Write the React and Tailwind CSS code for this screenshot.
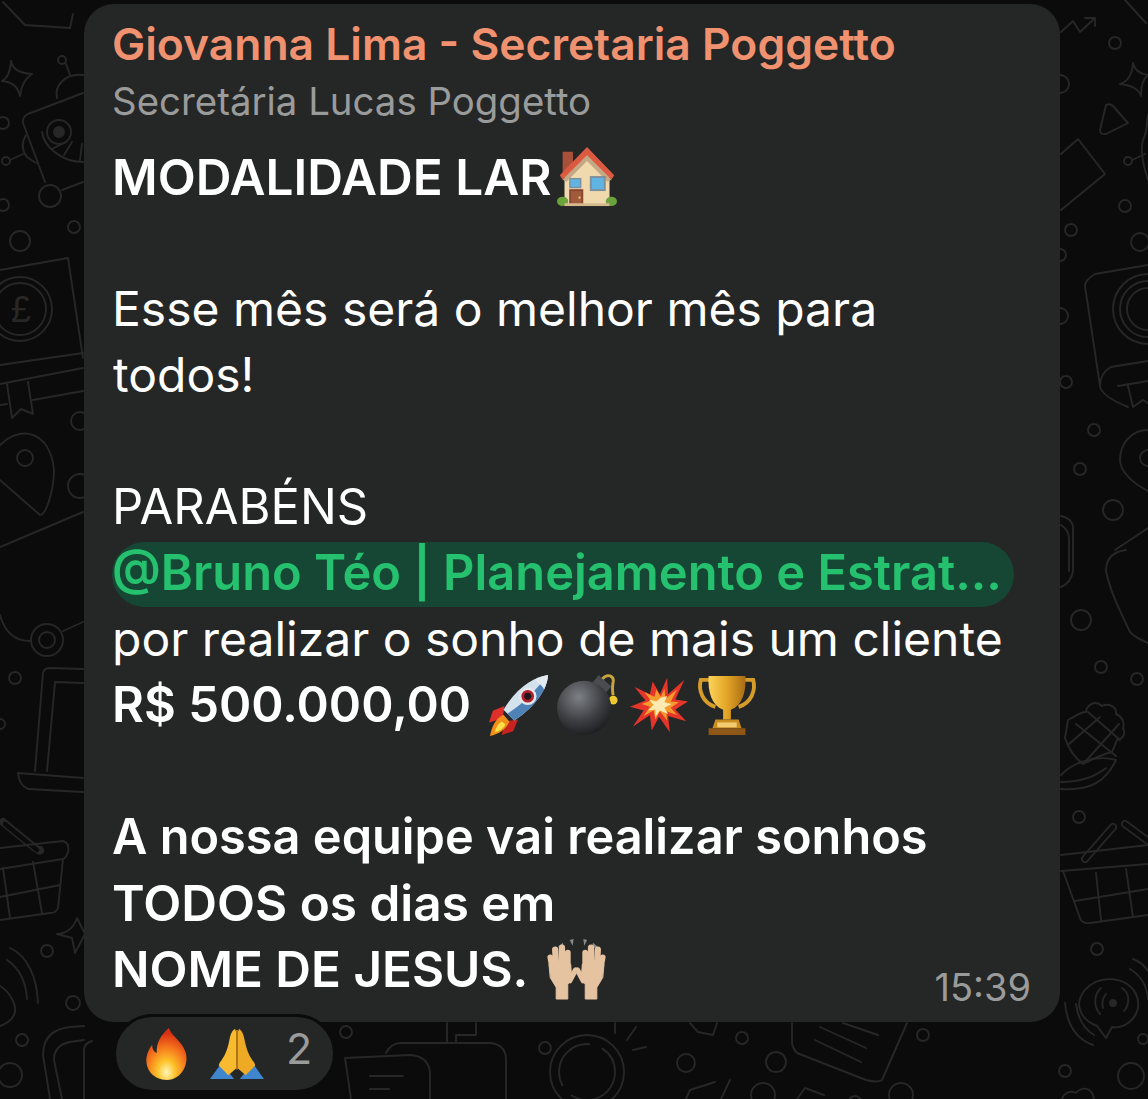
const House = ({ className }) => (
  <svg viewBox="0 0 64 64" className={className}>
    <path d="M6 5h11v16L6 30z" fill="#a9503b" />
    <path d="M8 30 32 6l24 24v31H8z" fill="#f1d9ae" />
    <path d="M32 0 3 30l3 5L32 9l26 26 3-5z" fill="#dc5a41" />
    <path d="M32 9 6 35l4 2L32 15l22 22 4-2z" fill="#c2a884" />
    <rect x="13" y="33" width="13" height="11" fill="#7d8f9a" />
    <rect x="14.5" y="34.5" width="10" height="8" fill="#5fb4e2" />
    <rect x="35" y="31" width="17" height="16" fill="#7d8f9a" />
    <rect x="37" y="33" width="13" height="12" fill="#5fb4e2" />
    <rect x="13" y="45" width="15" height="17" fill="#8a4630" />
    <rect x="15" y="47" width="11" height="15" fill="#a15a3c" />
    <circle cx="24" cy="54" r="1.2" fill="#f1d36b" />
    <ellipse cx="6" cy="58" rx="6" ry="5" fill="#6aa33c" />
    <ellipse cx="58" cy="58" rx="6" ry="5" fill="#6aa33c" />
    <rect x="8" y="60" width="48" height="3" fill="#d3b98d" />
  </svg>
);

const Rocket = ({ className }) => (
  <svg viewBox="0 0 64 64" className={className}>
    <path d="M17 33 5 38 1 50l14-4z" fill="#df2f2b" />
    <path d="M31 47 26 59l-12 4 4-14z" fill="#c9231f" />
    <path d="M16 42C7 46 4 55 2 64c9-2 17-7 20-15z" fill="#f0901a" />
    <path d="M14 49c-4 3-6 7-7 11 5-1 9-4 11-8z" fill="#fbe04a" />
    <path d="M62 1C48 3 30 13 16 37l11 11C50 33 61 15 62 1z" fill="#d4e2ec" />
    <path d="M62 1c-1 14-12 32-35 47l-7-7C38 30 52 13 62 1z" fill="#4f83b8" />
    <path d="M62 1c-5 1-10 2-14 5 3 2 8 6 10 10 2-5 4-10 4-15z" fill="#e4ebf0" />
    <circle cx="41" cy="23" r="9" fill="#e5e9ec" />
    <circle cx="41" cy="23" r="6.5" fill="#b0202a" />
    <circle cx="41" cy="23" r="3.6" fill="#1f171c" />
  </svg>
);

const Bomb = ({ className }) => (
  <svg viewBox="0 0 64 64" className={className}>
    <defs>
      <radialGradient id="bombBody" cx="0.4" cy="0.3" r="0.8">
        <stop offset="0" stopColor="#7d8084" />
        <stop offset="0.55" stopColor="#3d3f43" />
        <stop offset="1" stopColor="#141517" />
      </radialGradient>
    </defs>
    <path d="M34 12 43 1l13 12-9 10z" fill="#4a4c50" />
    <path d="M47 5c5-6 12-3 11 3-1 5-1 9 0 14" fill="none" stroke="#c9a53e" strokeWidth="3" />
    <circle cx="58" cy="27" r="4.5" fill="#ecc92e" />
    <circle cx="28" cy="35" r="28" fill="url(#bombBody)" />
  </svg>
);

const Collision = ({ className }) => (
  <svg viewBox="0 0 64 64" className={className}>
    <path d="M41 2 42 20 60 4 50 26l14 2-14 9 12 13-20-6 2 18-12-17-8 15-2-17L3 56l12-18L0 34l17-7L5 12l17 8 3-14 8 14z" fill="#e5352a" />
    <path d="M38 14 39 25 52 15 45 28l9 1-9 6 7 8-12-4 1 10-8-10-5 9-2-10-11 6 7-10-9-3 10-4-7-9 11 5 2-8 5 8z" fill="#f59a2d" />
    <path d="M34 24 41 22 38 29 46 31 38 35 42 42 33 38 28 45 28 37 20 38 26 32 21 26 29 28z" fill="#fdeab0" />
  </svg>
);

const Trophy = ({ className }) => (
  <svg viewBox="0 0 64 64" className={className}>
    <defs>
      <linearGradient id="trophyGold" x1="0" x2="1">
        <stop offset="0" stopColor="#fbd35a" />
        <stop offset="0.5" stopColor="#e3a526" />
        <stop offset="1" stopColor="#a86c14" />
      </linearGradient>
    </defs>
    <path d="M15 6H5c-3 11 2 24 15 28M49 6h10c3 11-2 24-15 28" fill="none" stroke="#d69c2a" strokeWidth="4" />
    <path d="M13 2h38c1 16-3 30-15 35v10h-8V37C16 32 12 18 13 2z" fill="url(#trophyGold)" />
    <path d="M20 47h24l3 9H17z" fill="#c98c20" />
    <rect x="22" y="50" width="20" height="5" fill="#f1cc70" />
    <rect x="13" y="56" width="38" height="7" fill="#8f5716" />
  </svg>
);

const Hand = () => (
  <g stroke="#e6c3a0" strokeLinecap="round" fill="#e6c3a0">
    <path d="M8 36 5 20" strokeWidth="6" />
    <path d="M11 30 10 12" strokeWidth="6.5" />
    <path d="M17 30V10" strokeWidth="6.5" />
    <path d="M23 32V15" strokeWidth="6" />
    <path d="M25 44 31 33" strokeWidth="5.5" />
    <path d="M4 27h22l1 14-4 7v15H11V51L5 41z" strokeWidth="1" />
  </g>
);

const Hands = ({ className }) => (
  <svg viewBox="0 0 64 64" className={className}>
    <g fill="#8a8a8a">
      <path d="m13 9 5-4 1 6z" />
      <path d="m25 2 4-1-1 7z" />
      <path d="m39 1 4 1-3 6z" />
      <path d="m49 5 5 4-6 2z" />
    </g>
    <Hand />
    <g transform="matrix(-1 0 0 1 64 0)">
      <Hand />
    </g>
  </svg>
);

const Fire = ({ className }) => (
  <svg viewBox="0 0 48 56" className={className}>
    <defs>
      <radialGradient id="fireCore" cx="0.5" cy="0.85" r="0.75">
        <stop offset="0" stopColor="#fff6b8" />
        <stop offset="0.3" stopColor="#fdc229" />
        <stop offset="0.65" stopColor="#f5761c" />
        <stop offset="1" stopColor="#d92f14" />
      </radialGradient>
    </defs>
    <path d="M26 0c3 9 14 14 18 26 4 13-4 29-20 30C9 56 0 44 2 31c1-5 3-9 6-13 0 5 2 8 5 9C12 16 18 7 26 0z" fill="url(#fireCore)" />
  </svg>
);

const Pray = ({ className }) => (
  <svg viewBox="0 0 56 54" className={className}>
    <path d="M0 53 12 36l13 17z" fill="#3f86cf" />
    <path d="M56 53 44 36 31 53z" fill="#3f86cf" />
    <path d="M26 1c-3 1-5 6-6 12-2 10-5 17-10 23l-1 3 10 10 8-7V4z" fill="#f8bb30" />
    <path d="M30 1c3 1 5 6 6 12 2 10 5 17 10 23l1 3-10 10-8-7V4z" fill="#eeaa24" />
    <path d="M27 2h2v40l-1 2-1-2z" fill="#b47a14" />
  </svg>
);

const Wallpaper = () => (
  <svg viewBox="0 0 1148 1099" className="absolute inset-0 h-full w-full" fill="none" stroke="#272727" strokeWidth="1.9" strokeLinecap="round" strokeLinejoin="round">
    {/* left side, top */}
    <path d="M3 2 25 25l45 3 3-14" />
    <path d="M11 61q2 12 21 13-10 6-12 22-3-14-18-15 8-4 9-20z" />
    <path d="M83 93 28 114q-6 3-5 9l22 59" />
    <circle cx="50" cy="196" r="11" />
    <path d="m62 190 21-8M10 160l13-6" />
    <circle cx="6" cy="161" r="4" />
    <path d="M26 135q-7 12 1 22l9 6" />
    <circle cx="59" cy="132" r="12" />
    <circle cx="59" cy="132" r="5" fill="#272727" />
    <path d="M42 132c2 15 20 30 41 30M52 149l14-7M64 155l8-13M80 160l2-16" />
    <circle cx="62" cy="60" r="4" />
    <path d="m66 64 4 11M57 98c-3-12 8-25 26-23" />
    <circle cx="3" cy="123" r="6" />
    <circle cx="3" cy="205" r="6" />
    <circle cx="74" cy="227" r="6" />
    <circle cx="20" cy="241" r="10" />
    <path d="m0 270 68-12 15 100" />
    <circle cx="20" cy="309" r="32" />
    <circle cx="20" cy="309" r="26" />
    <text x="11" y="322" fontSize="36" fill="#272727" stroke="none" fontFamily="Liberation Sans">£</text>
    <path d="m0 365 83-12M0 384l83-16M0 405l7-1M33 400l50-9" />
    <path d="m7 384 5 34 9-9 12 5-5-32" />
    <circle cx="80" cy="421" r="9" />
    <circle cx="80" cy="486" r="12" />
    <path d="M0 445c20-20 50-15 54 25 0 20-8 45-14 45L0 480" />
    <circle cx="25" cy="458" r="8" />
    <path d="m0 547 83-35" />
    {/* left side, bottom */}
    <path d="M0 615c5 18 15 26 30 26" />
    <circle cx="47" cy="640" r="16" />
    <circle cx="47" cy="640" r="8" />
    <path d="m63 631 20-9" />
    <circle cx="15" cy="678" r="6" />
    <circle cx="0" cy="724" r="5" />
    <path d="m35 771 8-98q1-5 7-5l33 1M47 771l8-89 28 1" />
    <path d="m18 773 65 5M18 773q1 12 10 16l55 3" />
    <path d="m3 822 32 26q6 4 5 2" strokeWidth="8" stroke="#272727" />
    <path d="m5 824 32 26" strokeWidth="4.5" stroke="#0b0b0b" />
    <path d="m0 848 63-7q7 2 5 11-2 6-5 7L0 869" />
    <path d="m63 859-5 49q-2 5-8 5L0 920M3 868l7 50M33 862l9 51M0 897l60-12" />
    <path d="m77 918 8 16-10 19-3-15-15-4q15-1 20-16z" />
    <circle cx="47" cy="951" r="6" />
    <circle cx="73" cy="1003" r="7" />
    <circle cx="22" cy="1040" r="6" />
    <circle cx="10" cy="1075" r="12" />
    <path d="M10 948c18 8 27 30 28 55M7 960c12 8 19 22 20 39M0 986c10 6 16 18 15 26-2 8-9 12-15 14" />
    <path d="m50 1099-7-44q0-25 27-28l14-1M62 1099l-8-39q0-15 16-18l14-2" />
    {/* bottom */}
    <circle cx="346" cy="1032" r="6" />
    <path d="M447 1023v19M456 1042v-7h20v-12" />
    <path d="M386 1053q5-10 15-10h90q15 2 15 17v39" />
    <path d="M345 1058l65-3q18 1 20 17v27M345 1058l6 41M370 1076h33M370 1089h19" />
    <circle cx="545" cy="1048" r="6" />
    <circle cx="587" cy="1072" r="37" />
    <circle cx="587" cy="1072" r="28" strokeDasharray="60 14" />
    <path d="M615 1023v10M627 1040l9-13M633 1050l13-3" />
    <circle cx="686" cy="1063" r="9" />
    <circle cx="742" cy="1038" r="6" />
    <circle cx="776" cy="1062" r="10" />
    <path d="m690 1023 8 9 15 3 4-12" />
    <path d="M792 1023v20q1 6 5 10l69 27q12 3 16 0l25-57M820 1027l46 21M815 1040l46 22M843 1023l35 12" />
    <circle cx="923" cy="1035" r="6" />
    <circle cx="901" cy="1095" r="12" />
    <circle cx="763" cy="1095" r="12" />
    <path d="m686 1099 4-9 25-8M730 1080l-9 19M797 1099l8-11 19 7" />
    <circle cx="855" cy="1102" r="6" />
    <path d="M84 1099v-50q1-6 8-8" />
    {/* right side, top */}
    <path d="m1125 0 21 23M1061 32l12-11 7 11 15-14-10 0M1095 18v8" />
    <circle cx="1115" cy="43" r="6" />
    <path d="M1133 63q2 10 15 12-7 5-7 21-3-10-21-12 12-4 13-21z" />
    <circle cx="1060" cy="84" r="9" />
    <path d="M1106 105q4-2 7 1l15 17-22 11q-6 1-6-4z" />
    <circle cx="1128" cy="161" r="4" />
    <path d="m1132 160 13-6M1148 115c-2 10 0 15-5 25-3 10 0 25 5 40" />
    <path d="m1061 154 17-15 27 35-44 36" />
    <circle cx="1125" cy="206" r="6" />
    <circle cx="1071" cy="230" r="6" />
    <circle cx="1140" cy="242" r="9" />
    <circle cx="1060" cy="255" r="6" />
    <circle cx="1060" cy="316" r="8" />
    <circle cx="1066" cy="382" r="6" />
    <path d="m1148 265-53 9q-10 6-10 12l15 100q1 10 28 21" />
    <circle cx="1148" cy="309" r="35" />
    <circle cx="1148" cy="309" r="28" />
    <circle cx="1148" cy="309" r="21" />
    <path d="m1148 361-37 6q-11 6-11 19M1118 386l30-5M1128 386l5 21 10-7 5 3" />
    <circle cx="1094" cy="430" r="6" />
    <circle cx="1080" cy="469" r="6" />
    <circle cx="1113" cy="510" r="10" />
    <path d="M1148 430c-18 0-28 15-28 30 0 12 14 24 28 31" />
    <circle cx="1148" cy="458" r="8" />
    <path d="m1148 528-33 22" />
    <path d="M1061 516q10 2 12 10v45q-2 12-12 16M1061 525q8 5 8 14v32" />
    {/* right side, bottom */}
    <circle cx="1081" cy="620" r="10" />
    <circle cx="1101" cy="667" r="6" />
    <circle cx="1137" cy="679" r="6" />
    <path d="M1126 550c-16 2-20 12-20 21 4 20 14 40 24 61q6 6 18 11" />
    <path d="M1061 789c30 2 45-8 55-29-22-6-45 4-55 15M1061 782c20 0 35-6 45-14" />
    <path d="M1068 720c8-4 12-8 18-8 1-8 10-12 16-6 6-3 15 0 14 8 6 2 9 9 7 14 3 6 0 11-6 12l-5 12c-8 2-18 6-29 12-8-6-14-14-18-26z" />
    <path d="m1076 724 40 32M1088 712l32 28M1068 745l32-28M1085 762l34-38" />
    <circle cx="1079" cy="817" r="6" />
    <path d="m1085 859 28-32" strokeWidth="8" />
    <path d="m1085 859 28-32" strokeWidth="4.5" stroke="#0b0b0b" />
    <path d="m1125 824 23 17" strokeWidth="8" />
    <path d="m1125 824 23 17" strokeWidth="4.5" stroke="#0b0b0b" />
    <path d="m1061 855 87-10M1061 871l87-7M1063 871l17 47q2 6 10 5l58-8M1096 873l5 47M1126 869l7 48M1075 901l73-12" />
    <circle cx="1097" cy="949" r="6" />
    <path d="M1097 1026c-16-6-24-22-12-36 14-16 42-14 51 4 8 18-8 36-24 33l-6 11z" />
    <circle cx="1113" cy="1003" r="3" fill="#272727" />
    <path d="M1103 1008c-2-6 0-10 3-14M1122 988c8 5 8 16 2 23M1100 1014c-7-8-6-20 1-26" />
    <path d="M1065 1003q3 33 28 42M1076 1004q3 22 18 31M1133 959q10 4 15 12M1130 969c10 6 17 16 18 30" />
    <circle cx="1143" cy="1039" r="5" />
    <circle cx="1065" cy="1071" r="6" />
    <circle cx="1131" cy="1076" r="13" />
    <path d="M1062 1099c2-6 8-9 14-6 6-7 16-6 18 6" />
  </svg>
);

export default function App() {
  return (
    <div className="relative h-[1099px] w-[1148px] overflow-hidden bg-[#0b0b0b] pt-1 pl-[84px] font-['Inter',sans-serif] text-[48px] leading-[66px] text-white">
      <Wallpaper />
      <div className="relative w-[976px]">
        <div className="h-[1018px] rounded-[30px] bg-[#252626] pt-3 pl-[28px]">
          <div className="h-[57px] text-[44.4px] leading-[57px] font-semibold text-[#f0916f]">Giovanna Lima - Secretaria Poggetto</div>
          <div className="h-[57px] text-[38.4px] leading-[57px] text-[#9a9b9b]">Secretária Lucas Poggetto</div>
          <div className="mt-[14px] flex h-[66px] items-center text-[49.5px] font-semibold">
            MODALIDADE LAR
            <House className="ml-[6px] h-[60px] w-[60px]" />
          </div>
          <div className="h-[66px]" />
          <div className="h-[66px]">Esse mês será o melhor mês para</div>
          <div className="h-[66px] pl-px">todos!</div>
          <div className="h-[66px]" />
          <div className="h-[66px] text-[48.9px]">PARABÉNS</div>
          <div className="mt-[2px] -mb-[1px] h-[65px] w-[902px] rounded-full bg-[#154734] text-[48.8px] leading-[62px] font-semibold text-[#25c16f]">@Bruno Téo | Planejamento e Estrat...</div>
          <div className="h-[66px]">por realizar o sonho de mais um cliente</div>
          <div className="flex h-[66px] items-center text-[49px] font-semibold">
            R$ 500.000,00
            <Rocket className="ml-[17px] h-[62px] w-[62px]" />
            <Bomb className="ml-[7px] h-[62px] w-[62px]" />
            <Collision className="ml-[11px] h-[58px] w-[58px]" />
            <Trophy className="ml-[8px] h-[62px] w-[62px]" />
          </div>
          <div className="h-[66px]" />
          <div className="h-[66px] text-[48.7px] font-semibold">A nossa equipe vai realizar sonhos</div>
          <div className="h-[66px] text-[49.5px] font-semibold">TODOS os dias em</div>
          <div className="flex h-[66px] items-center justify-between pr-[29px]">
            <div className="flex items-center text-[49.4px] font-semibold">
              NOME DE JESUS.
              <Hands className="ml-4 h-[62px] w-[65px]" />
            </div>
            <span className="self-end text-[38px] leading-[30px] text-[#9a9b9b]">15:39</span>
          </div>
        </div>
        <div className="relative ml-[29px] -mt-[8px] flex h-[79px] w-[223px] items-center rounded-full border-[3px] border-[#0b0b0b] bg-[#252626] pl-[28px]">
          <Fire className="h-[52px] w-[46px]" />
          <Pray className="ml-[19px] h-[52px] w-[56px]" />
          <span className="ml-[21px] -mt-3 text-[43px] text-[#9a9b9b]">2</span>
        </div>
      </div>
    </div>
  );
}
